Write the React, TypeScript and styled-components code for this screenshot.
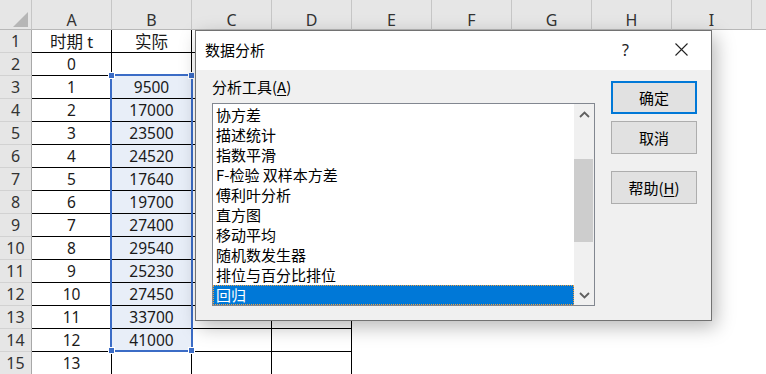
import { Fragment } from "react";
import styled, { createGlobalStyle } from "styled-components";

const GlobalStyle = createGlobalStyle`
  html, body {
    margin: 0;
    padding: 0;
    background: #ffffff;
    overflow: hidden;
  }
  body {
    font-family: "Noto Sans", "Noto Sans CJK SC", sans-serif;
    color: #000;
  }
`;

// last column is only partly on screen, its letter stays hidden
const COLS = ["A", "B", "C", "D", "E", "F", "G", "H", "I", ""];

const colA = ["时期 t", "0", "1", "2", "3", "4", "5", "6", "7", "8", "9", "10", "11", "12", "13"];
const colB = [
  "实际", "", "9500", "17000", "23500", "24520", "17640", "19700",
  "27400", "29540", "25230", "27450", "33700", "41000", "",
];

const tools = [
  "协方差",
  "描述统计",
  "指数平滑",
  "F-检验 双样本方差",
  "傅利叶分析",
  "直方图",
  "移动平均",
  "随机数发生器",
  "排位与百分比排位",
  "回归",
];

const Page = styled.div`
  position: relative;
  width: 766px;
  height: 374px;
  overflow: hidden;
`;

const Sheet = styled.div`
  display: grid;
  grid-template-columns: 32px repeat(10, 80px);
  grid-template-rows: 30px repeat(15, 23px);
  font-family: "Noto Sans", "Noto Sans CJK SC", sans-serif;
`;

const Corner = styled.div`
  box-sizing: border-box;
  background: #e6e6e6;
  border-right: 1px solid #c6c6c6;
  border-bottom: 1px solid #b8b8b8;
  padding: 11px 0 0 13px;
`;

const ColHead = styled.div`
  box-sizing: border-box;
  background: #e6e6e6;
  border-right: 1px solid #c6c6c6;
  border-bottom: 1px solid #b8b8b8;
  padding-top: 10px;
  display: flex;
  align-items: center;
  justify-content: center;
  font-size: 16px;
  color: #333;
`;

const RowHead = styled.div`
  box-sizing: border-box;
  background: #e6e6e6;
  border-right: 1px solid #a8a8a8;
  border-bottom: 1px solid #d2d2d2;
  display: flex;
  align-items: center;
  justify-content: center;
  font-size: 16px;
  color: #333;
`;

const Cell = styled.div<{ $boxed: boolean; $sel: boolean }>`
  box-sizing: border-box;
  background: ${(p) => (p.$sel ? "#e8eef8" : "#ffffff")};
  border-right: 1px solid ${(p) => (p.$boxed ? "#000" : "transparent")};
  border-bottom: 1px solid ${(p) => (p.$boxed ? "#000" : "transparent")};
  display: flex;
  align-items: center;
  justify-content: center;
  font-size: 15.5px;
  color: #1a1a1a;
  white-space: nowrap;
`;

const CellHan = styled.span`
  font-size: 16.5px;
`;

const SelFrame = styled.div`
  position: absolute;
  left: 110px;
  top: 74px;
  width: 83px;
  height: 278px;
  box-sizing: border-box;
  border: 2px solid #3b6cc6;
  pointer-events: none;
`;

const Handle = styled.div<{ $x: "l" | "r"; $y: "t" | "b" }>`
  position: absolute;
  width: 5px;
  height: 5px;
  background: #3b6cc6;
  border: 1px solid #ffffff;
  ${(p) => (p.$x === "l" ? "left: -4px;" : "right: -4px;")}
  ${(p) => (p.$y === "t" ? "top: -4px;" : "bottom: -4px;")}
`;

const Dialog = styled.div`
  position: absolute;
  left: 195px;
  top: 30px;
  width: 517px;
  height: 291px;
  box-sizing: border-box;
  border: 1px solid #727272;
  background: #f0f0f0;
  box-shadow: 4px 6px 18px rgba(0, 0, 0, 0.28);
  display: flex;
  flex-direction: column;
  font-family: "Noto Sans CJK SC", "Noto Sans", sans-serif;
  font-size: 15px;
`;

const TitleBar = styled.div`
  height: 37px;
  background: #ffffff;
  display: flex;
  align-items: center;
  padding: 0 23px 2px 9px;
  flex-shrink: 0;
`;

const Title = styled.div`
  flex: 1;
  font-size: 15px;
  color: #000;
`;

const HelpMark = styled.div`
  font-family: "Noto Sans", sans-serif;
  font-size: 16px;
  color: #222;
  margin-right: 46px;
`;

const Body = styled.div`
  flex: 1;
  display: flex;
  align-items: flex-start;
  padding-left: 16px;
`;

const LeftCol = styled.div`
  width: 383px;
  margin-top: 7px;
  display: flex;
  flex-direction: column;
  gap: 6px;
`;

const Label = styled.div`
  line-height: 20px;
  color: #000;
`;

const Key = styled.span`
  text-decoration: underline;
  text-underline-offset: 2px;
`;

const ListBox = styled.div`
  box-sizing: border-box;
  height: 203px;
  border: 1px solid #828790;
  background: #ffffff;
  display: flex;
`;

const Items = styled.div`
  flex: 1;
  padding-top: 1px;
  display: flex;
  flex-direction: column;
`;

const Item = styled.div<{ $active?: boolean }>`
  height: 20px;
  line-height: 20px;
  padding-left: 3px;
  white-space: nowrap;
  color: ${(p) => (p.$active ? "#ffffff" : "#000")};
  background: ${(p) => (p.$active ? "#0078d7" : "transparent")};
  outline: ${(p) => (p.$active ? "1px dotted #f0a040" : "none")};
  outline-offset: -1px;
`;

const ScrollBar = styled.div`
  width: 20px;
  background: #f0f0f0;
  display: flex;
  flex-direction: column;
`;

const Arrow = styled.div`
  height: 20px;
  display: flex;
  align-items: center;
  justify-content: center;
`;

const Track = styled.div`
  flex: 1;
`;

const Thumb = styled.div`
  margin: 35px 1px 0 0;
  height: 83px;
  background: #cdcdcd;
`;

const ButtonCol = styled.div`
  margin: 11px 0 0 16px;
  width: 86px;
  display: flex;
  flex-direction: column;
`;

const Button = styled.div<{ $primary?: boolean; $gap: number }>`
  box-sizing: border-box;
  height: 33px;
  margin-top: ${(p) => p.$gap}px;
  background: #e1e1e1;
  border: ${(p) => (p.$primary ? "2px solid #0078d7" : "1px solid #adadad")};
  display: flex;
  align-items: center;
  justify-content: center;
  color: #000;
`;

function Chevron({ up }: { up?: boolean }) {
  return (
    <svg width="11" height="7" viewBox="0 0 11 7">
      <polyline
        points={up ? "1,6 5.5,1.5 10,6" : "1,1 5.5,5.5 10,1"}
        fill="none"
        stroke="#606060"
        strokeWidth="1.8"
      />
    </svg>
  );
}

function cellText(r: number, ci: number) {
  const v = ci === 0 ? colA[r] : ci === 1 ? colB[r] : "";
  if (r === 0 && v) return <CellHan>{v}</CellHan>;
  return v;
}

export default function App() {
  return (
    <Page>
      <GlobalStyle />
      <Sheet>
        <Corner>
          <svg width="16" height="16" viewBox="0 0 16 16">
            <polygon points="0,15 15,15 15,0" fill="#b6b6b6" />
          </svg>
        </Corner>
        {COLS.map((c, i) => (
          <ColHead key={"c" + i}>{c}</ColHead>
        ))}
        {colA.map((_, r) => (
          <Fragment key={"r" + r}>
            <RowHead>{r + 1}</RowHead>
            {COLS.map((_c, ci) => (
              <Cell key={ci} $boxed={ci < 4} $sel={ci === 1 && r >= 2 && r <= 13}>
                {cellText(r, ci)}
              </Cell>
            ))}
          </Fragment>
        ))}
      </Sheet>

      <SelFrame>
        <Handle $x="l" $y="t" />
        <Handle $x="r" $y="t" />
        <Handle $x="l" $y="b" />
        <Handle $x="r" $y="b" />
      </SelFrame>

      <Dialog>
        <TitleBar>
          <Title>数据分析</Title>
          <HelpMark>?</HelpMark>
          <svg width="13" height="13" viewBox="0 0 13 13">
            <path d="M0.5 0.5 L12.5 12.5 M12.5 0.5 L0.5 12.5" stroke="#222" strokeWidth="1.1" />
          </svg>
        </TitleBar>
        <Body>
          <LeftCol>
            <Label>
              分析工具(<Key>A</Key>)
            </Label>
            <ListBox>
              <Items>
                {tools.map((t, i) => (
                  <Item key={t} $active={i === tools.length - 1}>
                    {t}
                  </Item>
                ))}
              </Items>
              <ScrollBar>
                <Arrow>
                  <Chevron up />
                </Arrow>
                <Track>
                  <Thumb />
                </Track>
                <Arrow>
                  <Chevron />
                </Arrow>
              </ScrollBar>
            </ListBox>
          </LeftCol>
          <ButtonCol>
            <Button $primary $gap={0}>确定</Button>
            <Button $gap={7}>取消</Button>
            <Button $gap={17}>
              帮助(<Key>H</Key>)
            </Button>
          </ButtonCol>
        </Body>
      </Dialog>
    </Page>
  );
}
